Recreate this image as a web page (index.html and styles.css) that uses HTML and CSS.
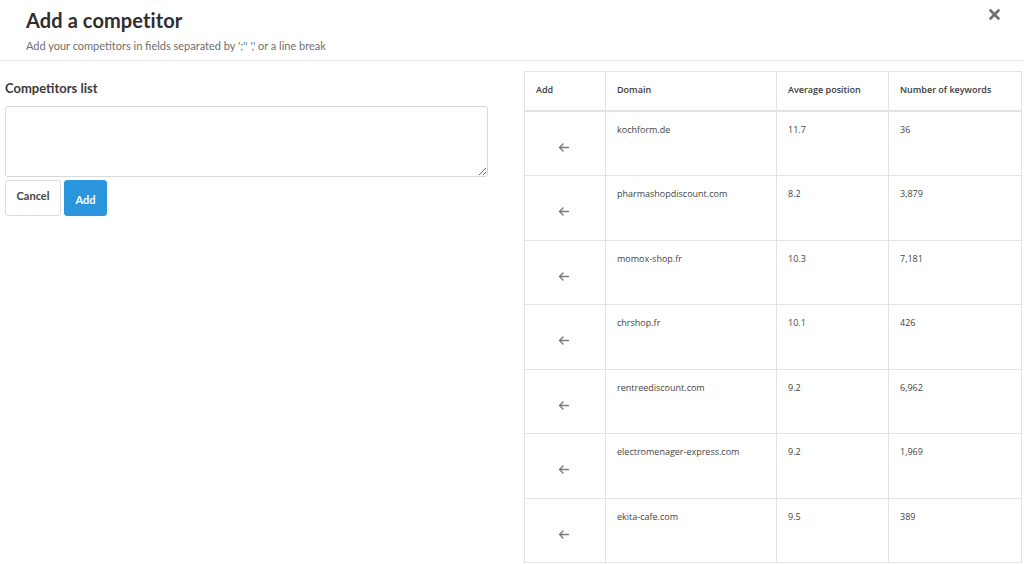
FILE: index.html
```html
<!DOCTYPE html>
<html lang="en">
<head>
  <meta charset="UTF-8">
  <title>Add a competitor</title>
  <link rel="stylesheet" href="styles.css">
</head>
<body>
  <div class="modal">
    <!-- header -->
    <div class="modal-header">
      <div>
        <h1 class="modal-title">Add a competitor</h1>
        <p class="modal-sub">Add your competitors in fields separated by ';'' ',' or a line break</p>
      </div>
      <button class="close" aria-label="Close">
        <svg width="11" height="11" viewBox="0 0 11 11"><path d="M1.5 1.5 L9.5 9.5 M9.5 1.5 L1.5 9.5" stroke="#6f6f6f" stroke-width="2.6" stroke-linecap="round"/></svg>
      </button>
    </div>

    <div class="modal-body">
      <!-- left form -->
      <div class="form-col">
        <label class="form-label" for="list">Competitors list</label>
        <textarea id="list" class="form-input"></textarea>
        <div class="actions">
          <button class="btn btn-default">Cancel</button>
          <button class="btn btn-primary">Add</button>
        </div>
      </div>

      <!-- suggestions -->
      <div class="table-col">
        <table class="suggest">
          <colgroup>
            <col class="c-add"><col class="c-domain"><col class="c-pos"><col class="c-kw">
          </colgroup>
          <thead>
            <tr><th>Add</th><th>Domain</th><th>Average position</th><th>Number of keywords</th></tr>
          </thead>
          <tbody>
            <tr><td class="arrow"><svg class="arr" viewBox="0 0 11 9"><path d="M10.5 4.5 H1.5 M5 1 L1.5 4.5 L5 8" /></svg></td><td>kochform.de</td><td>11.7</td><td>36</td></tr>
            <tr><td class="arrow"><svg class="arr" viewBox="0 0 11 9"><path d="M10.5 4.5 H1.5 M5 1 L1.5 4.5 L5 8" /></svg></td><td>pharmashopdiscount.com</td><td>8.2</td><td>3,879</td></tr>
            <tr><td class="arrow"><svg class="arr" viewBox="0 0 11 9"><path d="M10.5 4.5 H1.5 M5 1 L1.5 4.5 L5 8" /></svg></td><td>momox-shop.fr</td><td>10.3</td><td>7,181</td></tr>
            <tr><td class="arrow"><svg class="arr" viewBox="0 0 11 9"><path d="M10.5 4.5 H1.5 M5 1 L1.5 4.5 L5 8" /></svg></td><td>chrshop.fr</td><td>10.1</td><td>426</td></tr>
            <tr><td class="arrow"><svg class="arr" viewBox="0 0 11 9"><path d="M10.5 4.5 H1.5 M5 1 L1.5 4.5 L5 8" /></svg></td><td>rentreediscount.com</td><td>9.2</td><td>6,962</td></tr>
            <tr><td class="arrow"><svg class="arr" viewBox="0 0 11 9"><path d="M10.5 4.5 H1.5 M5 1 L1.5 4.5 L5 8" /></svg></td><td>electromenager-express.com</td><td>9.2</td><td>1,969</td></tr>
            <tr><td class="arrow"><svg class="arr" viewBox="0 0 11 9"><path d="M10.5 4.5 H1.5 M5 1 L1.5 4.5 L5 8" /></svg></td><td>ekita-cafe.com</td><td>9.5</td><td>389</td></tr>
          </tbody>
        </table>
      </div>
    </div>
  </div>
</body>
</html>
```

FILE: styles.css
```css
html, body { margin: 0; padding: 0; height: 100%; background: #fff; overflow: hidden; }
body { font-family: "Lato", "Open Sans", sans-serif; color: #333; }

/* header */
.modal-header { display: flex; justify-content: space-between; align-items: flex-start; padding: 8px 24px 0 26px; height: 52px; border-bottom: 1px solid #e5e5e5; }
.modal-title { margin: 0; font-size: 20px; font-weight: 700; line-height: 24px; color: #2e2e2e; letter-spacing: 0.1px; }
.modal-sub { margin: 7px 0 0; font-size: 11px; line-height: 14px; color: #6e6e6e; }
.close { border: 0; background: none; padding: 0; margin-top: 1px; cursor: pointer; line-height: 0; }

/* body */
.modal-body { display: flex; align-items: flex-start; padding: 10px 3px 0 5px; }
.form-col { width: 483px; flex: none; }
.form-label { display: block; font-size: 13px; font-weight: 700; color: #3a3a3a; margin: 9px 0 10px; line-height: 16px; }
.form-input { display: block; box-sizing: border-box; width: 483px; height: 71px; border: 1px solid #d9d9d9; border-radius: 3px; margin: 0; resize: vertical; font-family: inherit; }
.actions { display: flex; gap: 3px; margin-top: 3px; }
.btn { box-sizing: border-box; height: 36px; border-radius: 3px; font-family: inherit; font-size: 11px; font-weight: 700; padding: 0; cursor: pointer; }
.btn-default { width: 56px; background: #fff; border: 1px solid #dcdcdc; color: #444; padding-bottom: 5px; }
.btn-primary { width: 43px; background: #2b96dd; border: 1px solid #2b96dd; color: #fff; padding-top: 2px; }

.table-col { margin-left: 36px; width: 497px; flex: none; }
.suggest { border-collapse: collapse; width: 497px; table-layout: fixed; font-family: "Open Sans", sans-serif; font-size: 9px; color: #444; }
.suggest th, .suggest td { border: 1px solid #e3e3e3; text-align: left; padding: 0 11px; }
.suggest th { height: 35px; font-weight: 600; color: #3a3a3a; border-bottom: 2px solid #e3e3e3; padding-bottom: 3px; }
.suggest td { height: 64.5px; vertical-align: top; padding-top: 11px; box-sizing: border-box; }
.c-add { width: 81px; }
.c-domain { width: 171px; }
.c-pos { width: 112px; }
.c-kw { width: 133px; }
.suggest td.arrow { text-align: center; vertical-align: middle; padding: 8px 3px 0 0; line-height: 0; }
.arr { width: 11px; height: 9px; fill: none; stroke: #7a7a7a; stroke-width: 1.4; stroke-linecap: round; stroke-linejoin: round; }
```
